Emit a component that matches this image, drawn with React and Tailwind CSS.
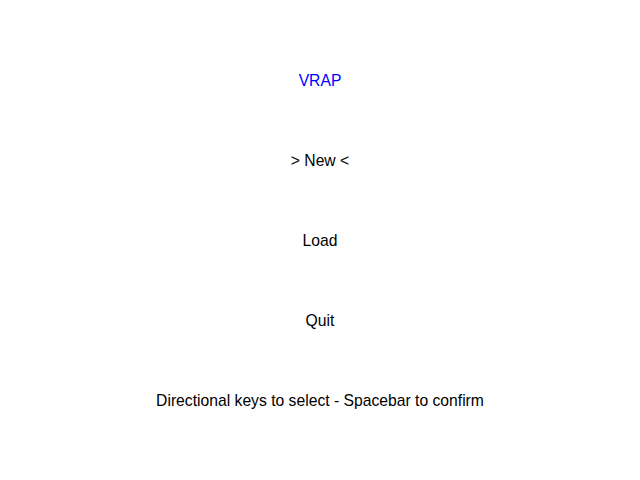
import React from "react";

const items = ["> New <", "Load", "Quit"];

export default function App() {
  return (
    <div
      className="w-[640px] h-[480px] bg-white flex flex-col items-center pt-[41px] text-[15.7px] text-black"
      style={{ fontFamily: '"Liberation Sans", Arial, sans-serif' }}
    >
      <div className="h-20 flex items-center text-[#0000ff]">VRAP</div>
      {items.map((item) => (
        <div key={item} className="h-20 flex items-center whitespace-pre">
          {item}
        </div>
      ))}
      <div className="h-20 flex items-center">
        Directional keys to select - Spacebar to confirm
      </div>
    </div>
  );
}
